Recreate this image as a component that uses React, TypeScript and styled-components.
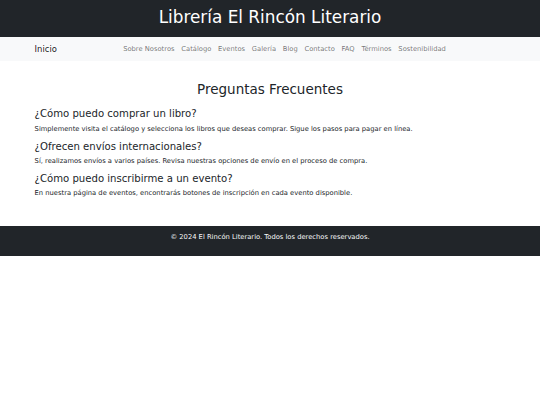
import React from "react";
import styled, { createGlobalStyle } from "styled-components";

const S = 0.421875;
const p = (n: number) => `${(n * S).toFixed(4)}px`;

const Global = createGlobalStyle`
  html, body { margin: 0; padding: 0; background: #fff; }
  body {
    font-family: "DejaVu Sans", Verdana, sans-serif;
    font-size: ${p(16)};
    line-height: 1.5;
    color: #212529;
  }
  * { box-sizing: border-box; }
`;

const Header = styled.header`
  background: #212529;
  color: #fff;
  text-align: center;
  padding: ${p(16)} 0;
`;

const Title = styled.h1`
  margin: 0 0 ${p(8)};
  font-size: ${p(40)};
  font-weight: 500;
  line-height: 1.2;
`;

const Container = styled.div`
  width: 100%;
  max-width: ${p(1140)};
  margin: 0 auto;
  padding: 0 ${p(12)};
`;

const Navbar = styled.nav`
  background: #f8f9fa;
  padding: ${p(8)} 0;
`;

const NavInner = styled(Container)`
  display: flex;
  align-items: center;
`;

const Brand = styled.a`
  font-size: ${p(20)};
  line-height: 1.5;
  padding: ${p(5)} 0;
  margin-right: ${p(16)};
  color: rgba(0, 0, 0, 0.9);
  text-decoration: none;
  white-space: nowrap;
`;

const Collapse = styled.div`
  flex: 1 1 auto;
  display: flex;
`;

const NavList = styled.ul`
  display: flex;
  list-style: none;
  margin: 0 auto;
  padding: 0;
`;

const NavLink = styled.a`
  display: block;
  padding: ${p(8)};
  color: rgba(0, 0, 0, 0.55);
  text-decoration: none;
  white-space: nowrap;
`;

const Main = styled(Container)`
  display: flow-root;
  margin-top: ${p(48)};
`;

const Heading = styled.h2`
  text-align: center;
  font-size: ${p(32)};
  font-weight: 500;
  line-height: 1.2;
  margin: 0 0 ${p(26)};
`;

const FaqItem = styled.div``;

const Question = styled.h4`
  font-size: ${p(24)};
  font-weight: 500;
  line-height: 1.2;
  margin: 0 0 ${p(8)};
`;

const Answer = styled.p`
  margin: 0 0 ${p(16)};
`;

const Footer = styled.footer`
  background: #212529;
  color: #f8f9fa;
  text-align: center;
  padding: ${p(16)} 0;
  margin-top: ${p(48)};
`;

const FooterText = styled.p`
  margin: 0 0 ${p(16)};
`;

const links = [
  "Sobre Nosotros",
  "Catálogo",
  "Eventos",
  "Galería",
  "Blog",
  "Contacto",
  "FAQ",
  "Términos",
  "Sostenibilidad",
];

const faqs = [
  {
    q: "¿Cómo puedo comprar un libro?",
    a: "Simplemente visita el catálogo y selecciona los libros que deseas comprar. Sigue los pasos para pagar en línea.",
  },
  {
    q: "¿Ofrecen envíos internacionales?",
    a: "Sí, realizamos envíos a varios países. Revisa nuestras opciones de envío en el proceso de compra.",
  },
  {
    q: "¿Cómo puedo inscribirme a un evento?",
    a: "En nuestra página de eventos, encontrarás botones de inscripción en cada evento disponible.",
  },
];

export default function App() {
  return (
    <>
      <Global />
      <Header>
        <Title>Librería El Rincón Literario</Title>
      </Header>
      <Navbar>
        <NavInner>
          <Brand href="#">Inicio</Brand>
          <Collapse>
            <NavList>
              {links.map((l) => (
                <li key={l}>
                  <NavLink href="#">{l}</NavLink>
                </li>
              ))}
            </NavList>
          </Collapse>
        </NavInner>
      </Navbar>
      <Main>
        <Heading>Preguntas Frecuentes</Heading>
        {faqs.map((f) => (
          <FaqItem key={f.q}>
            <Question>{f.q}</Question>
            <Answer>{f.a}</Answer>
          </FaqItem>
        ))}
      </Main>
      <Footer>
        <FooterText>© 2024 El Rincón Literario. Todos los derechos reservados.</FooterText>
      </Footer>
    </>
  );
}
